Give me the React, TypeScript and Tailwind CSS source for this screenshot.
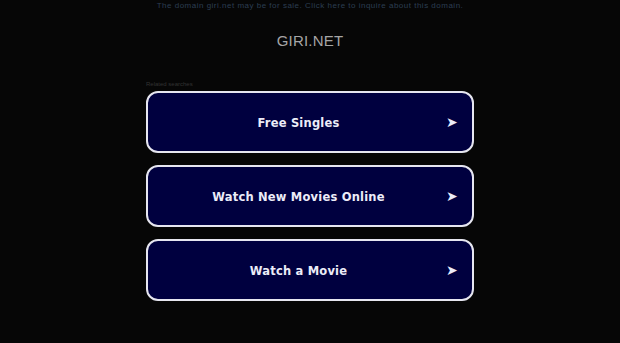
import React from 'react';

const links = ['Free Singles', 'Watch New Movies Online', 'Watch a Movie'];

export default function App() {
  return (
    <div className="min-h-[343px] bg-[#060606] font-['Liberation_Sans',Arial,sans-serif]">
      <div className="pt-[1px] text-center text-[8px] leading-[10px] tracking-[0.5px] text-[#2c3e52]">
        The domain giri.net may be for sale. Click here to inquire about this domain.
      </div>
      <div className="mt-[21px] text-center text-[15px] leading-[18px] tracking-[0.2px] text-[#a5a5a5]">
        GIRI.NET
      </div>
      <div className="mx-auto mt-[30px] w-[328px]">
        <div className="text-[6px] leading-[8px] text-[#333333]">Related searches</div>
        <div className="mt-[3px] flex flex-col gap-[12px]">
          {links.map((l) => (
            <a
              key={l}
              href="#"
              className="relative flex h-[62px] items-center justify-center rounded-[12px] border-2 border-[#e6e6f0] bg-[#00003f] pt-[3px] pr-[23px] font-['DejaVu_Sans',Verdana,sans-serif] text-[11.5px] font-bold tracking-[0.2px] text-[#ececf8]"
            >
              {l}
              <span className="absolute right-[14px] top-1/2 -translate-y-1/2 text-[14px] font-normal">➤</span>
            </a>
          ))}
        </div>
      </div>
    </div>
  );
}
